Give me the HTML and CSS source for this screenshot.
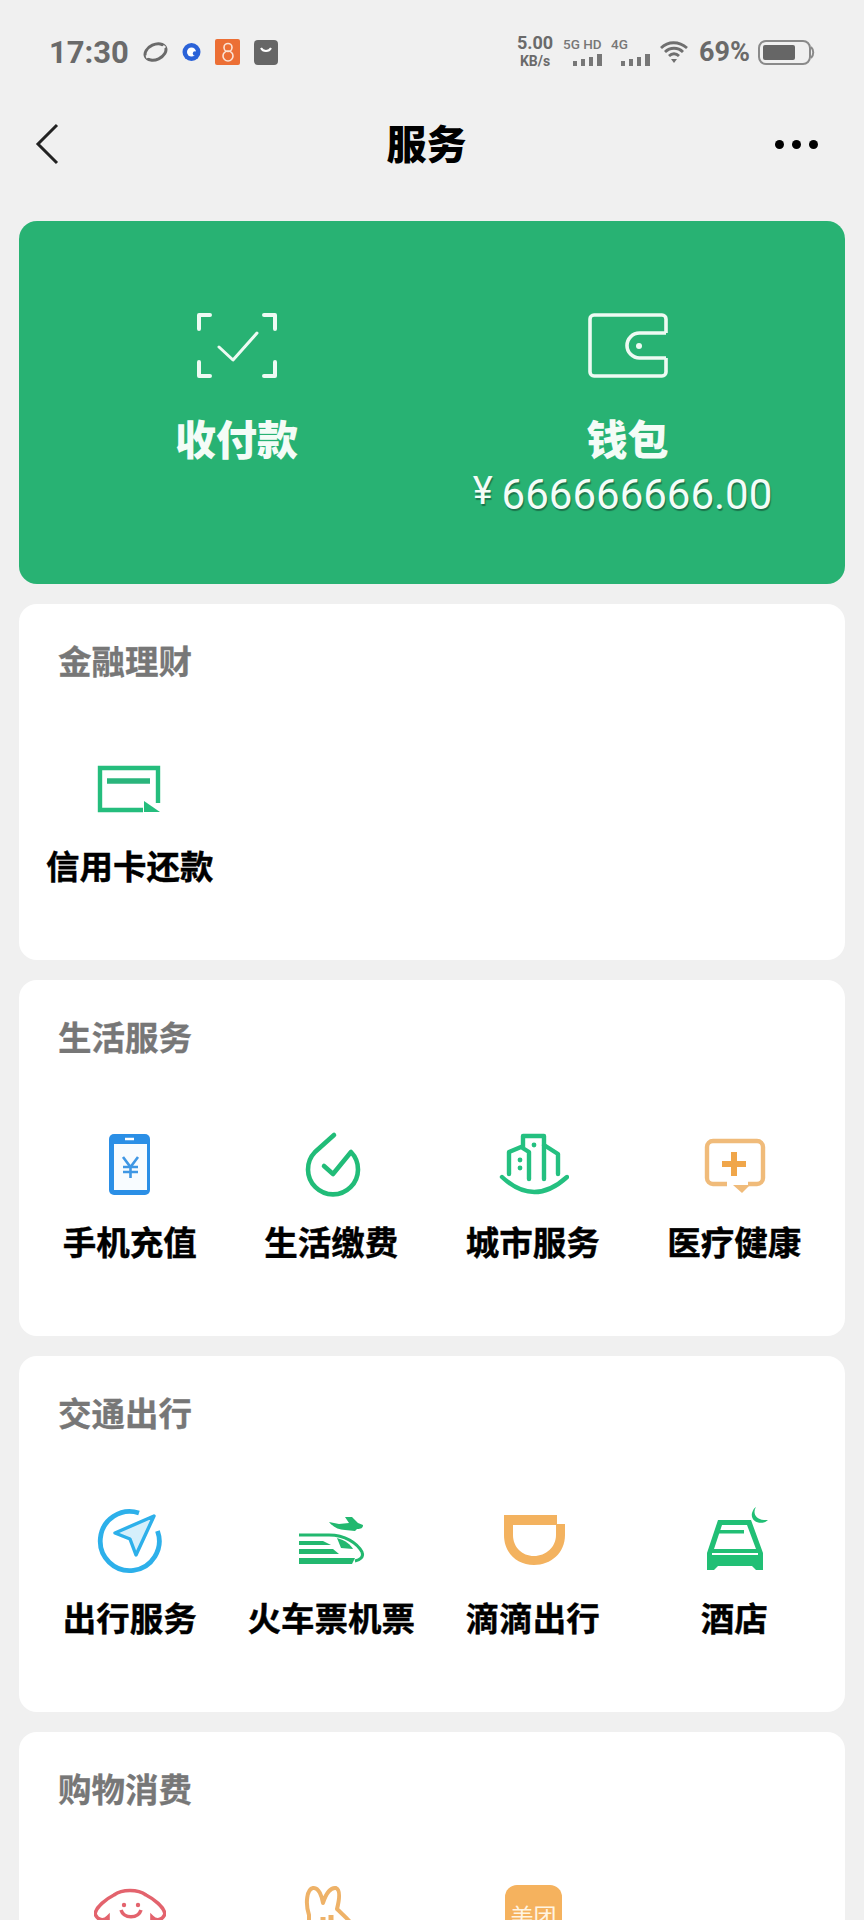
FILE: index.html
```html
<!DOCTYPE html>
<html lang="zh-CN">

<head>
    <meta charset="UTF-8">
    <meta name="viewport" content="width=device-width, initial-scale=1.0">
    <title>服务</title>
    <link rel="stylesheet" href="styles.css">
</head>

<body>
    <div class="page">
        <!-- status bar -->
        <div class="status">
            <div class="status-left">
                <span class="time">17:30</span>
                <svg width="25" height="24" viewBox="0 0 25 24" fill="none" stroke="#6a6a6a">
                    <ellipse cx="12.5" cy="12" rx="11" ry="7.5" transform="rotate(-25 12.5 12)" stroke-width="3"/>
                    <path d="M3 17 C10 15 17 11 22 6" stroke="#f0f0f0" stroke-width="3"/>
                </svg>
                <svg width="19" height="20" viewBox="0 0 19 20">
                    <circle cx="9.5" cy="10" r="9" fill="#2a62d8"/>
                    <circle cx="9.5" cy="10" r="4.5" fill="#fff"/>
                    <circle cx="13" cy="11.5" r="2.2" fill="#2a62d8"/>
                </svg>
                <svg width="25" height="26" viewBox="0 0 25 26" fill="none">
                    <rect width="25" height="26" rx="2" fill="#ec6f35"/>
                    <circle cx="13" cy="8.5" r="4" stroke="#fbe3d5" stroke-width="1.6"/>
                    <circle cx="13" cy="17" r="5" stroke="#fbe3d5" stroke-width="1.6"/>
                </svg>
                <svg width="24" height="25" viewBox="0 0 24 25" fill="none">
                    <rect width="24" height="25" rx="4" fill="#666"/>
                    <path d="M7 8 C9 12 15 12 17 8" stroke="#fff" stroke-width="2"/>
                </svg>
            </div>
            <div class="status-right">
                <div class="net"><b>5.00</b><span>KB/s</span></div>
                <div class="sim sim-first">
                    <span>5G HD</span>
                    <svg width="29" height="13" viewBox="0 0 29 13" fill="#777">
                        <rect x="0" y="7" width="4" height="5"/>
                        <rect x="8" y="5" width="4" height="7"/>
                        <rect x="16" y="3" width="4" height="9"/>
                        <rect x="24" y="0" width="5" height="12"/>
                    </svg>
                </div>
                <div class="sim">
                    <span>4G</span>
                    <svg width="29" height="13" viewBox="0 0 29 13" fill="#777">
                        <rect x="0" y="7" width="4" height="5"/>
                        <rect x="8" y="5" width="4" height="7"/>
                        <rect x="16" y="3" width="4" height="9"/>
                        <rect x="24" y="0" width="5" height="12"/>
                    </svg>
                </div>
                <svg class="wifi" width="29" height="23" viewBox="0 0 29 23" fill="none" stroke="#6f6f6f" stroke-width="2.8">
                    <path d="M1 7 C8 0 19 0 27 7"/>
                    <path d="M5 11 C10 6 18 6 23 11"/>
                    <path d="M9 15 C12 12 16 12 19 15"/>
                    <path d="M11 18 L14 22 L17 18 Z" fill="#6f6f6f" stroke="none"/>
                </svg>
                <span class="pct">69%</span>
                <svg width="57" height="25" viewBox="0 0 57 25" fill="none">
                    <rect x="1" y="1" width="51" height="23" rx="7" stroke="#8a8a8a" stroke-width="2"/>
                    <rect x="5" y="5" width="32" height="15" rx="2" fill="#666"/>
                    <path d="M53 7 C56 10 56 15 53 18" stroke="#8a8a8a" stroke-width="2"/>
                </svg>
            </div>
        </div>

        <!-- top nav -->
        <div class="nav">
            <svg class="back" width="24" height="42" viewBox="0 0 24 42" fill="none" stroke="#222" stroke-width="3">
                <path d="M22 2 L3 21 L22 40"/>
            </svg>
            <h1>服务</h1>
            <div class="more"><i></i><i></i><i></i></div>
        </div>

        <!-- green card -->
        <div class="hero">
            <div class="hero-col">
                <svg width="80" height="65" viewBox="0 0 80 65" fill="none" stroke="#eefaf3" stroke-width="4" stroke-linejoin="round" stroke-linecap="round">
                    <path d="M13 2 H2 V16"/>
                    <path d="M67 2 H78 V16"/>
                    <path d="M2 49 V63 H13"/>
                    <path d="M78 49 V63 H67"/>
                    <path d="M22 34 L36 47 L60 20" stroke-width="3"/>
                </svg>
                <div class="hero-label">收付款</div>
            </div>
            <div class="hero-col">
                <svg width="80" height="65" viewBox="0 0 80 65" fill="none" stroke="#eefaf3" stroke-width="3.6">
                    <path d="M78 20 V6 a4 4 0 0 0 -4 -4 H6 a4 4 0 0 0 -4 4 V59 a4 4 0 0 0 4 4 H74 a4 4 0 0 0 4 -4 V45"/>
                    <path d="M78 20 H51.5 a12.5 12.5 0 0 0 0 25 H78"/>
                    <circle cx="51" cy="33" r="3" fill="#eefaf3" stroke="none"/>
                </svg>
                <div class="hero-label">钱包</div>
                <div class="amount"><span class="yen">¥</span>666666666.00</div>
            </div>
        </div>

        <!-- 金融理财 -->
        <section class="card">
            <h2>金融理财</h2>
            <div class="items">
                <div class="item">
                    <svg class="ic" viewBox="0 0 72 72" fill="none" stroke="#25bd7d" stroke-width="4.4">
                        <path d="M49 57 H6 V15 H64 V50"/>
                        <path d="M13 28 H56" stroke="#2ab57c" stroke-width="5.4"/>
                        <path d="M50 48 L66 59 H50 Z" fill="#25bd7d" stroke="none"/>
                    </svg>
                    <span>信用卡还款</span>
                </div>
            </div>
        </section>

        <!-- 生活服务 -->
        <section class="card">
            <h2>生活服务</h2>
            <div class="items">
                <div class="item">
                    <svg class="ic" viewBox="0 0 72 72" fill="none">
                        <rect x="15" y="5" width="41" height="61" rx="5" fill="#2b8fe6"/>
                        <rect x="20" y="15" width="33" height="46" fill="#f8fcff"/>
                        <path d="M31 10 H40" stroke="#fff" stroke-width="2.5"/>
                        <path d="M29 28 L36.5 38 L44 28 M29 38 H44 M29 43 H44 M36.5 38 V49" stroke="#3f97e4" stroke-width="2.6"/>
                    </svg>
                    <span>手机充值</span>
                </div>
                <div class="item">
                    <svg class="ic" viewBox="0 0 72 72" fill="none" stroke="#21bc78" stroke-width="4.6" stroke-linecap="round" stroke-linejoin="round">
                        <path d="M39 6 L20 23 A25 25 0 1 0 56 23 L38 45 L29 37"/>
                    </svg>
                    <span>生活缴费</span>
                </div>
                <div class="item">
                    <svg class="ic" viewBox="0 0 72 72" fill="none" stroke="#24c080" stroke-width="4.4" stroke-linejoin="round" stroke-linecap="round">
                        <path d="M5 48 Q37 78 70 48"/>
                        <path d="M12 45 V23 L24 18 L32 23 V50"/>
                        <path d="M26 18 V7 H47 V50"/>
                        <path d="M47 16 L61 25 V45"/>
                        <circle cx="23" cy="31" r="2.4" fill="#24c080" stroke="none"/>
                        <circle cx="23" cy="39" r="2.4" fill="#24c080" stroke="none"/>
                        <circle cx="37" cy="16" r="2.4" fill="#24c080" stroke="none"/>
                    </svg>
                    <span>城市服务</span>
                </div>
                <div class="item">
                    <svg class="ic" viewBox="0 0 72 72" fill="none" stroke="#f0bb7a" stroke-width="4.4">
                        <path d="M29 55 H15 a6 6 0 0 1 -6 -6 V18 a6 6 0 0 1 6 -6 H59 a6 6 0 0 1 6 6 V49 a6 6 0 0 1 -6 6 H50"/>
                        <path d="M35 56 H52 L44 64 Z" fill="#f0bb7a" stroke="none"/>
                        <path d="M24 35 H48 M36 23 V47" stroke="#f0a64a" stroke-width="6"/>
                    </svg>
                    <span>医疗健康</span>
                </div>
            </div>
        </section>

        <!-- 交通出行 -->
        <section class="card">
            <h2>交通出行</h2>
            <div class="items">
                <div class="item">
                    <svg class="ic" viewBox="0 0 72 72" fill="none" stroke="#2db0ea" stroke-width="4.8">
                        <path d="M45 8 A29.5 29.5 0 1 0 63.5 26"/>
                        <path d="M60 11 L21 28 L36 34 L42 50 Z" fill="#d5effb" stroke-width="3.4" stroke-linejoin="round"/>
                    </svg>
                    <span>出行服务</span>
                </div>
                <div class="item">
                    <svg class="ic" viewBox="0 0 72 72" fill="#22b86f">
                        <path d="M4 30 H34 C50 30 62 38 67 47 C69 52 65 55 60 56" fill="none" stroke="#22b86f" stroke-width="3"/>
                        <path d="M4 36 H28 L36 40 H4 Z"/>
                        <path d="M4 44 H38 L44 49 H4 Z"/>
                        <path d="M42 33 C50 35 56 40 58 44 L46 43 Z"/>
                        <path d="M4 53 H60 L57 59 H4 Z"/>
                        <path d="M34 17 L44 19 L54 18 L50 12 L57 12 L63 18 L68 20 C68 23 66 24 62 24 L60 26 L50 25 C44 25 38 22 34 17 Z"/>
                    </svg>
                    <span>火车票机票</span>
                </div>
                <div class="item">
                    <svg class="ic" viewBox="0 0 72 72">
                        <path fill="#f3b25f" fill-rule="evenodd" d="M7 10 H60 V19 H68 V30 C68 48 54 60 37 60 C20 60 7 48 7 30 Z M16 20 H59 V30 C59 42 49 51 37 51 C25 51 16 42 16 30 Z"/>
                    </svg>
                    <span>滴滴出行</span>
                </div>
                <div class="item">
                    <svg class="ic" viewBox="0 0 72 72">
                        <path fill="#21bf75" d="M20 15 H53 L65 48 V65 H58 L54 61 H20 L16 65 H9 V48 Z"/>
                        <path fill="#fff" d="M24 20 H49 L58 44 H16 Z"/>
                        <path fill="#21bf75" d="M20 25 H46 V28.5 H19 Z"/>
                        <path fill="#fff" d="M14 48 H60 V50 H14 Z"/>
                        <path fill="#21bf75" d="M58 2 C54 8 58 16 70 15 C64 21 52 17 54 8 C55 5 56 3 58 2 Z"/>
                    </svg>
                    <span>酒店</span>
                </div>
            </div>
        </section>

        <!-- 购物消费 -->
        <section class="card">
            <h2>购物消费</h2>
            <div class="items">
                <div class="item">
                    <svg class="ic" viewBox="0 0 72 72" fill="none" stroke="#e3636d" stroke-width="3.6">
                        <path d="M20 14 C28 8 44 8 52 14 C60 18 70 26 71 33 C68 40 62 40 58 36 V50 H14 V36 C10 40 4 40 1 33 C2 26 12 18 20 14 Z"/>
                        <circle cx="30" cy="24" r="2.2" fill="#e3636d" stroke="none"/>
                        <circle cx="44" cy="24" r="2.2" fill="#e3636d" stroke="none"/>
                        <path d="M27 29 C30 38 44 38 47 29"/>
                    </svg>
                </div>
                <div class="item">
                    <svg class="ic" viewBox="0 0 72 72" fill="none" stroke="#eeb268" stroke-width="4" stroke-linejoin="round">
                        <path d="M14 34 C10 22 12 8 18 7 C24 6 27 16 28 22 C31 12 36 6 41 7 C46 9 44 20 42 28 C48 34 56 40 60 48 L14 50 Z"/>
                        <path d="M28 36 V46 M36 34 V46" stroke-width="5"/>
                    </svg>
                </div>
                <div class="item">
                    <svg class="ic" viewBox="0 0 72 72">
                        <rect x="8" y="4" width="57" height="62" rx="12" fill="#f5b25e"/>
                        <text class="mt" x="36.5" y="44" text-anchor="middle">美团</text>
                    </svg>
                </div>
            </div>
        </section>
    </div>
</body>

</html>
```

FILE: styles.css
```css
html,
body {
    margin: 0;
    padding: 0;
}

body {
    background-color: #f0f0f0;
    font-family: "Noto Sans CJK SC", "Noto Sans", sans-serif;
}

.page {
    width: 864px;
    height: 1920px;
    overflow: hidden;
    background-color: #f0f0f0;
}

/* status bar */
.status {
    height: 104px;
    padding: 0 49px;
    box-sizing: border-box;
    display: flex;
    justify-content: space-between;
    align-items: center;
    color: #6a6a6a;
    font-family: Roboto, sans-serif;
}

.status-left,
.status-right {
    display: flex;
    align-items: center;
}

.status-left {
    gap: 14px;
}

.status-left svg,
.status-right svg {
    display: block;
}

.time {
    font-size: 31px;
    font-weight: 700;
}

.net {
    width: 36px;
    display: flex;
    flex-flow: column;
    align-items: center;
    line-height: 18px;
}

.net b {
    font-size: 18px;
}

.net span {
    font-size: 14px;
    font-weight: 700;
}

.sim {
    margin-left: 9px;
    display: flex;
    flex-flow: column;
    align-items: flex-start;
    gap: 3px;
    font-size: 13.5px;
    font-weight: 500;
    line-height: 14px;
    color: #777;
}

.sim svg {
    margin-left: 10px;
}

.sim-first {
    margin-left: 10px;
}

.wifi {
    margin-left: 10px;
}

.pct {
    margin: 0 8px 0 10px;
    font-size: 27px;
    font-weight: 700;
}

/* nav */
.nav {
    height: 80px;
    padding: 0 46px 0 35px;
    display: grid;
    grid-template-columns: 1fr auto 1fr;
    align-items: center;
}

.nav h1 {
    margin: 0 0 5px;
    font-size: 40px;
    font-weight: 900;
    color: #000;
    line-height: 48px;
}

.more {
    justify-self: end;
    display: flex;
    gap: 8px;
}

.more i {
    display: block;
    width: 9px;
    height: 9px;
    border-radius: 50%;
    background-color: #000;
}

/* green card */
.hero {
    margin: 37px 19px 0;
    height: 363px;
    padding: 92px 22px 0;
    box-sizing: border-box;
    background-color: #28b273;
    border-radius: 18px;
    display: grid;
    grid-template-columns: 1fr 1fr;
    color: #f4fcf7;
}

.hero-col {
    display: flex;
    flex-flow: column;
    align-items: center;
}

.hero-label {
    margin-top: 35px;
    font-size: 41px;
    font-weight: 900;
    line-height: 48px;
}

.amount {
    margin: 2px 10px 0 0;
    font-family: Roboto, sans-serif;
    font-size: 42px;
    line-height: 56px;
    text-shadow: 1px 2px 1px rgba(0, 0, 0, 0.35);
}

.yen {
    margin-right: 9px;
    font-size: 38px;
    vertical-align: 5px;
}

/* white cards */
.card {
    margin: 20px 19px 0;
    height: 356px;
    padding: 34px 10px 0;
    box-sizing: border-box;
    background-color: #fff;
    border-radius: 18px;
}

.card h2 {
    margin: 0 0 71px 29px;
    font-size: 33.5px;
    font-weight: 700;
    line-height: 44px;
    color: #777;
    -webkit-text-stroke: 0.3px #777;
}

.items {
    display: grid;
    grid-template-columns: repeat(4, 1fr);
}

.item {
    display: flex;
    flex-flow: column;
    align-items: center;
    gap: 18px;
    font-size: 33.5px;
    font-weight: 700;
    line-height: 44px;
    color: #000;
    -webkit-text-stroke: 0.4px #000;
}

.ic {
    display: block;
    width: 72px;
    height: 72px;
}

.mt {
    font-size: 23px;
    font-weight: 400;
    fill: #fff4e2;
    -webkit-text-stroke: 0;
}
```
